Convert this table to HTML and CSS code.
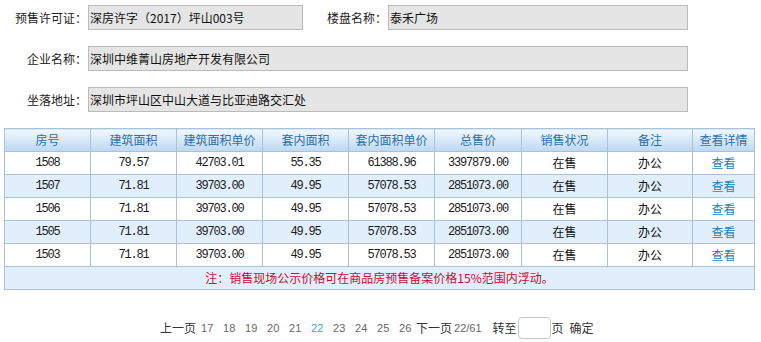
FILE: index.html
```html
<!DOCTYPE html>
<html lang="zh-CN">
<head>
<meta charset="utf-8">
<title>楼盘信息</title>
<link rel="stylesheet" href="styles.css">
</head>
<body>
<div class="page">
  <div class="form">
    <div class="form-row">
      <span class="label">预售许可证：</span>
      <span class="field field-short">深房许字（2017）坪山003号</span>
      <span class="label label-mid">楼盘名称：</span>
      <span class="field field-mid">泰禾广场</span>
    </div>
    <div class="form-row">
      <span class="label">企业名称：</span>
      <span class="field field-long">深圳中维菁山房地产开发有限公司</span>
    </div>
    <div class="form-row">
      <span class="label">坐落地址：</span>
      <span class="field field-long">深圳市坪山区中山大道与比亚迪路交汇处</span>
    </div>
  </div>

  <table class="grid">
    <colgroup>
      <col class="c86"><col class="c86"><col class="c86"><col class="c86"><col class="c86"><col class="c87"><col class="c86"><col class="c85"><col class="c62">
    </colgroup>
    <thead>
      <tr>
        <th>房号</th><th>建筑面积</th><th>建筑面积单价</th><th>套内面积</th><th>套内面积单价</th><th>总售价</th><th>销售状况</th><th>备注</th><th>查看详情</th>
      </tr>
    </thead>
    <tbody>
      <tr>
        <td class="num">1508</td><td class="num">79.57</td><td class="num">42703.01</td><td class="num">55.35</td><td class="num">61388.96</td><td class="num">3397879.00</td><td class="cn">在售</td><td class="cn">办公</td><td class="cn"><a class="link">查看</a></td>
      </tr>
      <tr class="alt">
        <td class="num">1507</td><td class="num">71.81</td><td class="num">39703.00</td><td class="num">49.95</td><td class="num">57078.53</td><td class="num">2851073.00</td><td class="cn">在售</td><td class="cn">办公</td><td class="cn"><a class="link">查看</a></td>
      </tr>
      <tr>
        <td class="num">1506</td><td class="num">71.81</td><td class="num">39703.00</td><td class="num">49.95</td><td class="num">57078.53</td><td class="num">2851073.00</td><td class="cn">在售</td><td class="cn">办公</td><td class="cn"><a class="link">查看</a></td>
      </tr>
      <tr class="alt">
        <td class="num">1505</td><td class="num">71.81</td><td class="num">39703.00</td><td class="num">49.95</td><td class="num">57078.53</td><td class="num">2851073.00</td><td class="cn">在售</td><td class="cn">办公</td><td class="cn"><a class="link">查看</a></td>
      </tr>
      <tr>
        <td class="num">1503</td><td class="num">71.81</td><td class="num">39703.00</td><td class="num">49.95</td><td class="num">57078.53</td><td class="num">2851073.00</td><td class="cn">在售</td><td class="cn">办公</td><td class="cn"><a class="link">查看</a></td>
      </tr>
      <tr class="alt">
        <td colspan="9" class="note">注：销售现场公示价格可在商品房预售备案价格15%范围内浮动。</td>
      </tr>
    </tbody>
  </table>

  <div class="pager">
    <a class="pg-text">上一页</a>
    <a class="pg-num">17</a>
    <a class="pg-num">18</a>
    <a class="pg-num">19</a>
    <a class="pg-num">20</a>
    <a class="pg-num">21</a>
    <a class="pg-num current">22</a>
    <a class="pg-num">23</a>
    <a class="pg-num">24</a>
    <a class="pg-num">25</a>
    <a class="pg-num">26</a>
    <a class="pg-text">下一页</a>
    <span class="pg-count">22/61</span>
    <span class="pg-text goto">转至</span>
    <span class="pg-input"></span>
    <span class="pg-text">页</span>
    <a class="pg-text confirm">确定</a>
  </div>
</div>
</body>
</html>
```

FILE: styles.css
```css
html, body {
  margin: 0;
  padding: 0;
  background: #ffffff;
}

body {
  font-family: "Noto Sans CJK SC", "Liberation Sans", sans-serif;
  font-size: 12px;
  color: #222;
}

.page {
  padding: 5px 0 0 4px;
}

.form {
  display: flex;
  flex-direction: column;
  gap: 16px;
}

.form-row {
  display: flex;
  align-items: center;
  height: 25px;
}

.label {
  width: 83px;
  text-align: right;
  line-height: 25px;
  color: #222;
  white-space: nowrap;
}

.label-mid {
  width: 84px;
}

.field {
  box-sizing: border-box;
  height: 25px;
  line-height: 23px;
  margin-left: 1px;
  padding-left: 1px;
  background: #e5e5e5;
  border: 1px solid #bababa;
  color: #111;
  white-space: nowrap;
  overflow: hidden;
}

.field-short { width: 215px; }
.field-mid { width: 300px; }
.field-long { width: 600px; }

.grid {
  margin-top: 16px;
  width: 750px;
  table-layout: fixed;
  border-collapse: collapse;
  border: 1px solid #a9c1d9;
}

.c86 { width: 86px; }
.c87 { width: 87px; }
.c85 { width: 85px; }
.c62 { width: 62px; }

.grid th,
.grid td {
  border: 1px solid #a9c1d9;
  height: 22px;
  padding: 0;
  text-align: center;
  line-height: 22px;
  white-space: nowrap;
  overflow: hidden;
}

.grid th {
  font-weight: normal;
  font-size: 12px;
  color: #2f6ead;
  background: linear-gradient(to bottom, #f2f8fd 0%, #d9eaf8 45%, #bcd8f1 100%);
}

.grid td {
  color: #111;
  background: #ffffff;
}

.grid td.cn {
  font-size: 12px;
}

.grid tr.alt td {
  background: #e1eefb;
}

.grid td.num {
  font-family: "Liberation Mono", "DejaVu Sans Mono", monospace;
  font-size: 12px;
  letter-spacing: -1.2px;
  color: #1a1a1a;
}

.link {
  color: #1f7fb6;
  cursor: pointer;
}

.grid td.note {
  color: #c8102e;
  font-size: 12px;
  text-align: center;
}

.pager {
  display: flex;
  align-items: center;
  height: 24px;
  margin-top: 26px;
  padding-left: 156px;
  white-space: nowrap;
}

.pg-text {
  color: #333;
  line-height: 24px;
}

.pg-num {
  display: inline-block;
  width: 12px;
  padding: 0 5px;
  text-align: center;
  color: #666;
  font-family: "Liberation Sans", sans-serif;
  font-size: 11px;
  line-height: 24px;
}

.pg-num.current {
  color: #3aa6d6;
}

.pg-count {
  color: #666;
  font-family: "Liberation Sans", sans-serif;
  font-size: 11px;
  margin-left: 2px;
}

.goto {
  margin-left: 11px;
}

.pg-input {
  box-sizing: border-box;
  width: 33px;
  height: 22px;
  margin: 0 1px;
  border: 1px solid #c8c8c8;
  border-radius: 4px;
  background: #fff;
}

.confirm {
  margin-left: 6px;
}
```
